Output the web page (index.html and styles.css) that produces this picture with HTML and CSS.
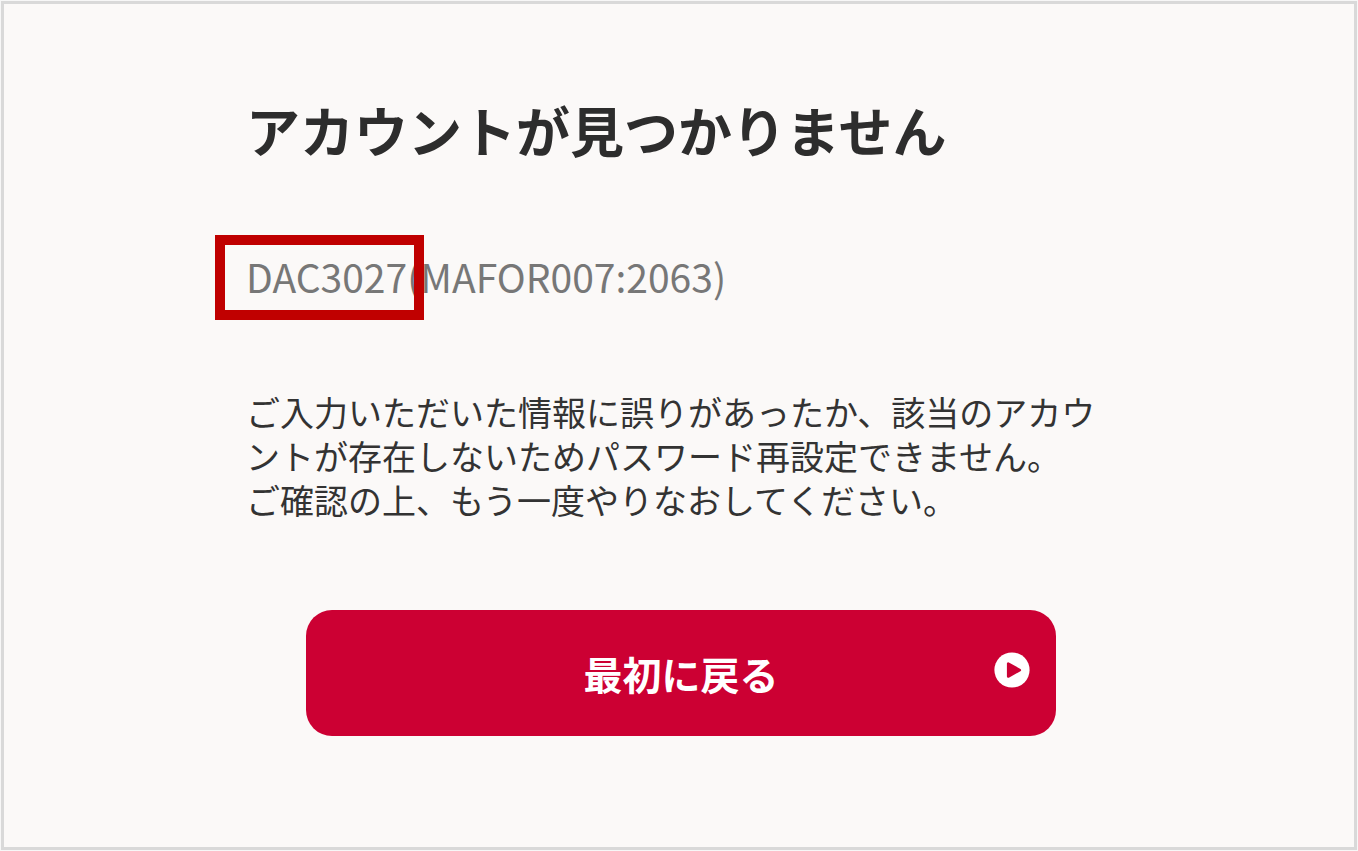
FILE: index.html
```html
<!DOCTYPE html>
<html lang="ja">
<head>
<meta charset="utf-8">
<meta name="viewport" content="width=device-width, initial-scale=1">
<title>アカウントが見つかりません</title>
<link rel="stylesheet" href="styles.css">
</head>
<body>
<main class="page">
  <div class="content">
    <h1 class="title">アカウントが見つかりません</h1>
    <p class="code"><span class="code-id">DAC3027<span class="marker"></span></span>(MAFOR007:2063)</p>
    <p class="message">ご入力いただいた情報に誤りがあったか、該当のアカウントが存在しないためパスワード再設定できません。
ご確認の上、もう一度やりなおしてください。</p>
    <button class="back" type="button">
      <span>最初に戻る</span>
      <svg class="back-icon" viewBox="0 0 36 36" aria-hidden="true"><circle cx="18" cy="18" r="17.600" fill="#fff"/><path d="M14.200 11.700v12.800L25.800 18.100z" fill="#cc0033" stroke="#cc0033" stroke-width="2.600" stroke-linejoin="round"/></svg>
    </button>
  </div>
</main>
</body>
</html>
```
FILE: styles.css
```css
* {
  box-sizing: border-box;
}

body {
  margin: 0;
  padding: 1px;
  background: #f7f7f7;
  font-family: "Noto Sans CJK JP", sans-serif;
}

.page {
  min-height: calc(100vh - 2px);
  padding: 86px 24px 80px 28px;
  border: 3px solid #d9d9d9;
  background: #fbf9f8;
}

.content {
  max-width: 870px;
  margin: 0 auto;
}

.title {
  margin: 0;
  color: #2d2d2d;
  font-size: 54px;
  line-height: 80px;
  font-weight: 700;
}

.code {
  margin: 76px 0 0;
  color: #777;
  font-size: 39px;
  line-height: 60px;
}

.code-id {
  position: relative;
}

.marker {
  position: absolute;
  top: -13px;
  right: -17px;
  bottom: -16px;
  left: -31px;
  border: 10px solid #c00000;
}

.message {
  margin: 84px 0 0;
  color: #333;
  font-size: 34px;
  line-height: 44px;
  white-space: pre-line;
}

.back {
  position: relative;
  display: block;
  width: calc(100% - 120px);
  margin: 88px auto 0;
  padding: 32px 64px;
  border: 0;
  border-radius: 26px;
  background: #cc0033;
  color: #fff;
  font-family: inherit;
  font-size: 39px;
  line-height: 62px;
  font-weight: 700;
}

.back-icon {
  position: absolute;
  top: 42px;
  right: 26px;
  width: 36px;
  height: 36px;
}
```
